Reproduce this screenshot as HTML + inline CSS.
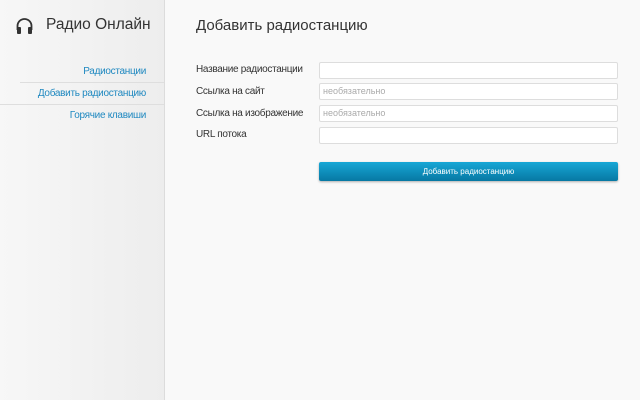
<!DOCTYPE html>
<html><head><meta charset="utf-8"><style>
body{margin:0;width:640px;height:400px;overflow:hidden;background:#f9f9f9;font-family:"Liberation Sans",sans-serif;position:relative}
.side{position:absolute;left:0;top:0;width:164px;height:400px;background:linear-gradient(90deg,#f7f7f7,#ededed);border-right:1px solid #dcdcdc}
.logo{position:absolute;left:46px;top:16px;font-size:15.5px;color:#333}
.hp{position:absolute;left:15px;top:17px}
.nav a{position:absolute;right:18px;font-size:10px;letter-spacing:-0.3px;color:#1e88c0;text-decoration:none}
.sep{position:absolute;height:1px;background:#dedede}
h1{position:absolute;left:196px;top:17px;margin:0;font-weight:normal;font-size:15px;color:#333}
.lab{position:absolute;left:196px;font-size:10px;letter-spacing:-0.3px;color:#333}
.inp{position:absolute;left:319px;width:294px;height:15px;background:#fff;border:1px solid #ddd;border-radius:2px;font-size:9px;color:#aaa;line-height:15px;padding-left:3px}
.btn{position:absolute;left:319px;top:162px;width:299px;height:19px;background:linear-gradient(#17a7d6,#0778a3);border-radius:2px;box-shadow:0 1px 2px rgba(0,0,0,.3);color:#fff;font-size:8px;text-align:center;line-height:19px}
</style></head><body>
<div class="side">
<svg class="hp" width="19" height="18" viewBox="0 0 19 18"><path d="M2.5 13V9a7 7 0 0 1 14 0v4" fill="none" stroke="#333" stroke-width="1.8"/><rect x="2" y="10" width="4" height="7" rx="1" fill="#333"/><rect x="13" y="10" width="4" height="7" rx="1" fill="#333"/></svg>
<div class="logo">Радио Онлайн</div>
<div class="nav">
<a style="top:66px">Радиостанции</a>
<div class="sep" style="left:20px;width:144px;top:82px"></div>
<a style="top:88px">Добавить радиостанцию</a>
<div class="sep" style="left:0;width:164px;top:104px"></div>
<a style="top:110px">Горячие клавиши</a>
</div>
</div>
<h1>Добавить радиостанцию</h1>
<div class="lab" style="top:64px">Название радиостанции</div>
<div class="lab" style="top:86px">Ссылка на сайт</div>
<div class="lab" style="top:108px">Ссылка на изображение</div>
<div class="lab" style="top:129px">URL потока</div>
<div class="inp" style="top:62px"></div>
<div class="inp" style="top:83px">необязательно</div>
<div class="inp" style="top:105px">необязательно</div>
<div class="inp" style="top:127px"></div>
<div class="btn">Добавить радиостанцию</div>
</body></html>
